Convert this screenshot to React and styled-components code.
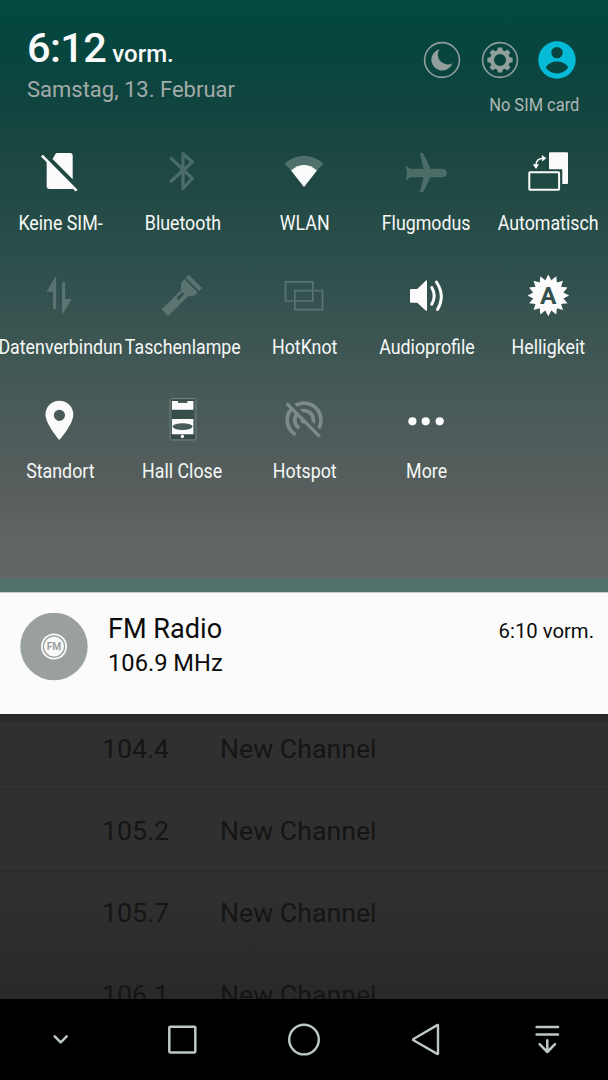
import React from "react";
import styled, { createGlobalStyle } from "styled-components";
import { MdPortableWifiOff } from "react-icons/md";

const GlobalStyle = createGlobalStyle`
  * { box-sizing: border-box; }
  body { margin: 0; background: #000; font-family: Roboto, "Liberation Sans", sans-serif; }
`;

const Screen = styled.main`
  width: 608px;
  height: 1080px;
  display: flex;
  flex-direction: column;
  overflow: hidden;
  white-space: nowrap;
`;

const QuickPanel = styled.section`
  height: 579px;
  flex: none;
  background: linear-gradient(
    #04493f 0, #05463f 40px, #10443f 100px, #1a4640 145px, #294d48 240px,
    #2f504d 280px, #425855 370px, #485a58 400px, #585f5e 495px, #636667 545px, #636667 579px
  );
`;

const Header = styled.header`
  height: 150px;
  padding: 23px 28px 0 27px;
  display: flex;
  justify-content: space-between;
`;

const Clock = styled.div`
  height: 50px;
  line-height: 50px;
  font-size: 41.5px;
  font-weight: 500;
  color: #fbfbfb;
  letter-spacing: -0.6px;
`;

const Meridiem = styled.span`
  margin-left: 6px;
  font-size: 24px;
  letter-spacing: 0;
`;

const DateLine = styled.div`
  margin-top: 4px;
  font-size: 22px;
  line-height: 26px;
  color: #a3abaa;
`;

const HeaderSide = styled.div`
  display: flex;
  flex-direction: column;
  align-items: flex-end;
  padding-top: 17px;
`;

const HeaderActions = styled.div`
  display: flex;
  gap: 17.5px;
  margin-right: 3px;
  svg { width: 40px; height: 40px; display: block; }
`;

const SimStatus = styled.div`
  margin: 14px 1px 0 0;
  font-size: 18.5px;
  line-height: 22px;
  color: #afb8b6;
  transform: scaleX(0.89);
  transform-origin: right;
`;

const TileGrid = styled.div`
  display: grid;
  grid-template-columns: repeat(5, 122px);
  grid-auto-rows: 124px;
  margin-left: -1px;
`;

const Tile = styled.div`
  display: flex;
  flex-direction: column;
  align-items: center;
  color: ${(p) => (p.$off ? "rgba(255,255,255,0.2)" : "#fbfbfb")};
`;

const TileIcon = styled.svg`
  width: 44px;
  height: 44px;
  flex: none;
  overflow: visible;
`;

const TileLabel = styled.span`
  margin: 16px 0 0 1px;
  font-size: 20.5px;
  line-height: 26px;
  color: #f6f8f7;
  transform: scaleX(0.868);
`;

const Strip = styled.div`
  height: 13px;
  flex: none;
  background: #50706a;
`;

const Notification = styled.section`
  height: 122px;
  flex: none;
  display: flex;
  padding: 20px 14px 0 20px;
  background: #fbfbfb;
  border-top: 1px solid #c3cdcb;
  color: #0b0b0b;
`;

const NotificationText = styled.div`
  flex: 1;
  margin-left: 20px;
`;

const NotificationTitle = styled.div`
  font-size: 27.1px;
  line-height: 32px;
`;

const NotificationDetail = styled.div`
  margin-top: 3px;
  font-size: 23.7px;
  line-height: 30px;
`;

const NotificationTime = styled.time`
  margin-top: 5px;
  font-size: 20.3px;
  line-height: 26px;
`;

const ChannelList = styled.section`
  height: 285px;
  flex: none;
  overflow: hidden;
  background: linear-gradient(#292929 0, #292929 7px, #303030 8px, #303030 170px, #292929 285px);
`;

const ChannelRow = styled.div`
  height: ${(p) => (p.$first ? 76 : 82)}px;
  padding: ${(p) => (p.$first ? 19 : 25)}px 0 0 102px;
  display: flex;
  border-bottom: 1px solid #2a2a2a;
  font-size: 26.7px;
  line-height: 32px;
  color: #151515;
`;

const Frequency = styled.span`
  width: 118px;
`;

const NavBar = styled.nav`
  height: 81px;
  flex: none;
  display: grid;
  grid-template-columns: repeat(5, 122px);
  margin-left: -1px;
  place-items: center;
  background: #000;
  color: #bcc8c6;
  svg { width: 44px; height: 44px; display: block; }
`;

const gearPath = (() => {
  const pts = [];
  for (let i = 0; i < 8; i++) {
    const a = (i * Math.PI) / 4;
    [[-0.27, 10], [-0.17, 12.8], [0.17, 12.8], [0.27, 10]].forEach(([d, r]) =>
      pts.push(`${(20 + r * Math.sin(a + d)).toFixed(2)} ${(20 - r * Math.cos(a + d)).toFixed(2)}`)
    );
  }
  return `M${pts.join("L")}Z M26 20a6 6 0 1 0-12 0a6 6 0 1 0 12 0Z`;
})();

const burstPoints = Array.from({ length: 32 }, (_, i) => {
  const r = i % 2 ? 15.4 : 20.8;
  const a = (i * Math.PI) / 16;
  return `${(22.3 + r * Math.sin(a)).toFixed(2)},${(21.4 - r * Math.cos(a)).toFixed(2)}`;
}).join(" ");

const stroke = { fill: "none", stroke: "currentColor" };

const tiles = [
  {
    label: "Keine SIM-",
    icon: (
      <g fill="currentColor">
        <path d="M14.5 9L17.8 3.6Q18.2 3 19 3H32Q34.7 3 34.7 5.7V29.2Z" />
        <path d="M8.7 11L36 38.3Q35 39 33 39H11.4Q8.7 39 8.7 36.3Z" />
        <path d="M3.9 5.6L38.6 40.6" stroke="currentColor" strokeWidth="2.7" />
      </g>
    ),
  },
  {
    label: "Bluetooth",
    off: true,
    icon: <path {...stroke} strokeWidth="3.2" strokeLinecap="round" strokeLinejoin="round" d="M11.2 8.5L32.3 28.5L23 38.5V3.7L32.3 12L11.2 31" />,
  },
  {
    label: "WLAN",
    icon: (
      <g fill="currentColor">
        <path opacity=".23" d="M2.5 13.5Q22-2 41.7 13.5L35 20.4Q22 9.5 9 20.4Z" />
        <path d="M9 20.4Q22 9.5 35 20.4L22 37Z" />
      </g>
    ),
  },
  {
    label: "Flugmodus",
    off: true,
    icon: <path fill="currentColor" d="M1.7 15.5L6.2 18.7H19.5L15.8 3H19.2L26.6 18.7H38.7A4.3 4.3 0 0 1 38.7 27.3H26.6L19.2 42H15.8L19.5 27.3H6.2L1.7 30.5L3 23Z" />,
  },
  {
    label: "Automatisch",
    icon: (
      <g fill="currentColor">
        <path d="M24 2.3H41Q42 2.3 42 3.3V33Q42 34 41 34H36.3V20.3Q36.3 19.3 35.3 19.3H23V3.3Q23 2.3 24 2.3Z" />
        <rect x="3.3" y="22.3" width="29.8" height="17.4" rx=".6" {...stroke} strokeWidth="2" />
        <path {...stroke} strokeWidth="1.5" d="M10 15Q10.2 8.7 17 8.3" />
        <path d="M15.9 5L20.4 8.3L15.9 11.5ZM6.8 14.3H13L10 18.9Z" />
      </g>
    ),
  },
  {
    label: "Datenverbindun",
    off: true,
    icon: (
      <g fill="currentColor">
        <path d="M16.5 4Q18.2 2 18.2 4.2V33.8A1.6 1.6 0 0 1 15 33.8V17.8H8.6Z" />
        <path d="M24.1 9A1.5 1.5 0 0 1 27.1 9V25H33.8L25.6 38.6Q24.1 40.4 24.1 38.5Z" />
      </g>
    ),
  },
  {
    label: "Taschenlampe",
    off: true,
    icon: <path fill="currentColor" fillRule="evenodd" d="M28.7.7L42 14L39.2 17L25.7 3.8ZM24.4 5.1L37.8 18.4L34.5 21.5L27.7 22.5L8 42L1.7 35.3L20.7 16.5L21.3 8.5ZM17.3 23.3A1.4 1.4 0 0 0 19.4 25.3L23.6 20.9A1.4 1.4 0 0 0 21.5 18.9Z" />,
  },
  {
    label: "HotKnot",
    off: true,
    icon: (
      <path {...stroke} strokeWidth="1.7" d="M11.5 27H3.5V7.8H30.8V27H14M29.5 16.7H12.8V35.7H40.6V16.7H32.2" />
    ),
  },
  {
    label: "Audioprofile",
    icon: (
      <g fill="currentColor">
        <path d="M7 15H13.2L22 6.4Q23 5.7 23 7V36.2Q23 37.4 22 36.7L13.2 28.7H7Q6 28.7 6 27.7V16Q6 15 7 15Z" />
        <path {...stroke} strokeWidth="3" strokeLinecap="round" d="M27.8 13.6Q32.6 21.8 27.8 30.2M32.4 8Q41.6 21.8 33.5 35.5" />
      </g>
    ),
  },
  {
    label: "Helligkeit",
    icon: (
      <>
        <polygon fill="currentColor" points={burstPoints} />
        <text x="22.3" y="29.8" textAnchor="middle" fontSize="24.5" fontWeight="700" fill="#35524e">A</text>
      </>
    ),
  },
  {
    label: "Standort",
    icon: <path fill="currentColor" fillRule="evenodd" d="M21.4 2.7A13.9 13.9 0 0 0 7.5 16.7C7.5 26 21.4 42 21.4 42S35.3 26 35.3 16.7A13.9 13.9 0 0 0 21.4 2.7ZM21.4 11.7A5.6 5.6 0 1 1 21.4 22.9A5.6 5.6 0 1 1 21.4 11.7Z" />,
  },
  {
    label: "Hall Close",
    icon: (
      <>
        <rect x="10" y=".5" width="26" height="41.5" rx="1.5" fill="#465d59" stroke="#71817e" />
        <path fill="#374a47" d="M11 1.5H35V3H11ZM11 36.3H35V41H11Z" />
        <path fill="#374d49" d="M12 11.7H33.4V21H12Z" />
        <path fill="#fbfbfb" d="M12 3H18V5H27.3V3H33.4V11.7H12ZM12 21H33.4V36.3H12Z" />
        <ellipse cx="22.6" cy="28.6" rx="10" ry="3.3" fill="#465a57" />
        <circle cx="22.4" cy="38.4" r="1.7" fill="#fbfbfb" />
      </>
    ),
  },
  {
    label: "Hotspot",
    off: true,
    icon: <MdPortableWifiOff size={45} x={-0.4} y={-0.5} color="#7c8b88" />,
  },
  {
    label: "More",
    icon: (
      <g fill="currentColor">
        <circle cx="8.4" cy="23.3" r="4.1" />
        <circle cx="21.7" cy="23.3" r="4.1" />
        <circle cx="35.7" cy="23.3" r="4.1" />
      </g>
    ),
  },
];

const channels = ["104.4", "105.2", "105.7", "106.1"];

const navIcons = [
  <path d="M16.7 18.3L22.7 24.3L28.7 18.3" strokeWidth="2.5" />,
  <rect x="9.3" y="8.8" width="26" height="25.6" rx=".8" strokeWidth="2.5" />,
  <circle cx="22" cy="21.6" r="14.8" strokeWidth="2.4" />,
  <path d="M33 7.7Q33 7 32.2 7.4L8.5 21.3Q7.6 22 8.5 22.6L32.2 36.2Q33 36.6 33 35.8Z" transform="translate(1 -.3)" strokeWidth="2.4" />,
  <path d="M10.6 9.1H32M10.6 16.5H32M21.3 22.3V34M13.6 26.2L21.3 34L29 26.2" strokeWidth="2.5" />,
];

export default function App() {
  return (
    <Screen>
      <GlobalStyle />
      <QuickPanel>
        <Header>
          <div>
            <Clock>6:12<Meridiem>vorm.</Meridiem></Clock>
            <DateLine>Samstag, 13. Februar</DateLine>
          </div>
          <HeaderSide>
            <HeaderActions>
              <svg viewBox="0 0 40 40" color="#929e9b">
                <circle cx="20" cy="20" r="17.4" {...stroke} strokeWidth="1.6" />
                <path fill="currentColor" d="M17.5 9.2A10.8 10.8 0 1 0 30.4 23.2A9.8 9.8 0 0 1 17.5 9.2Z" />
              </svg>
              <svg viewBox="0 0 40 40" color="#929e9b">
                <circle cx="20" cy="20" r="17.4" {...stroke} strokeWidth="1.6" />
                <path fill="currentColor" fillRule="evenodd" d={gearPath} />
              </svg>
              <svg viewBox="0 0 40 40">
                <circle cx="20" cy="20" r="18.7" fill="#04bad6" />
                <circle cx="20" cy="12.6" r="5.7" fill="#09453f" />
                <path fill="#09453f" d="M8.8 27.5C11 23.3 15.7 21.5 20 21.5S29 23.3 31.2 27.5C28.5 31.5 24.5 33.4 20 33.4S11.5 31.5 8.8 27.5Z" />
              </svg>
            </HeaderActions>
            <SimStatus>No SIM card</SimStatus>
          </HeaderSide>
        </Header>
        <TileGrid>
          {tiles.map((t) => (
            <Tile key={t.label} $off={t.off}>
              <TileIcon viewBox="0 0 44 44">{t.icon}</TileIcon>
              <TileLabel>{t.label}</TileLabel>
            </Tile>
          ))}
        </TileGrid>
      </QuickPanel>
      <Strip />
      <Notification>
        <svg width="68" height="68" viewBox="0 0 68 68">
          <circle cx="34" cy="33.5" r="33.7" fill="#9aa09f" />
          <circle cx="34" cy="33.5" r="13" fill="#fbfbfb" />
          <circle cx="34" cy="33.5" r="10.6" fill="none" stroke="#9aa09f" strokeWidth="1.3" />
          <text x="34" y="37.2" textAnchor="middle" fontSize="10.3" fontWeight="700" fill="#9aa09f">FM</text>
        </svg>
        <NotificationText>
          <NotificationTitle>FM Radio</NotificationTitle>
          <NotificationDetail>106.9 MHz</NotificationDetail>
        </NotificationText>
        <NotificationTime>6:10 vorm.</NotificationTime>
      </Notification>
      <ChannelList>
        {channels.map((c, i) => (
          <ChannelRow key={c} $first={i === 0}>
            <Frequency>{c}</Frequency>
            <span>New Channel</span>
          </ChannelRow>
        ))}
      </ChannelList>
      <NavBar>
        {navIcons.map((icon, i) => (
          <svg key={i} viewBox="0 0 44 44" {...stroke} strokeLinecap="round" strokeLinejoin="round">{icon}</svg>
        ))}
      </NavBar>
    </Screen>
  );
}
